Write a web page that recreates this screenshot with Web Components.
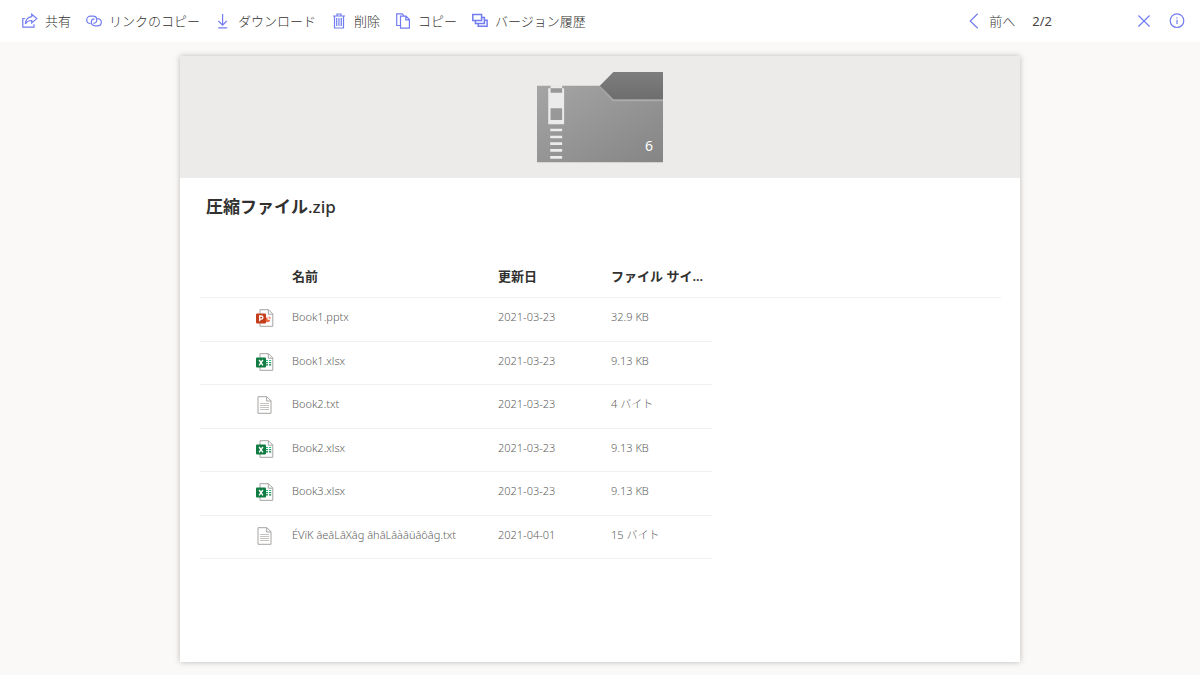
<!DOCTYPE html>
<html lang="ja">
<head>
<meta charset="utf-8">
<meta name="viewport" content="width=device-width, initial-scale=1">
<title>圧縮ファイル.zip</title>
<style>
  html { height: 100%; }
  body {
    margin: 0;
    min-height: 100%;
    display: flex;
    flex-direction: column;
    background: #faf9f8;
    color: #323130;
    font-family: "Noto Sans", "Noto Sans CJK JP", sans-serif;
    font-size: 13px;
    line-height: 20px;
  }
  file-viewer { flex: 1; }
</style>
</head>
<body>
<file-viewer></file-viewer>

<script>
const ICONS = {
  share: '<path d="M3 5.5H.8V14.2H12V11.2"/><path d="M9.7 1.2L14.8 5.6L9.7 10V7.5C6.6 7.5 4.8 8.7 3.4 11C3.6 7 5.8 4.2 9.7 3.7Z"/>',
  link: '<path d="M4.6 10.5C2.3 10.5.7 9 .7 7C.7 5 2.3 3.2 4.6 3.2H7C9.2 3.2 10.8 4.8 10.8 6.8C10.8 8.8 9.3 10.3 7.4 10.3"/><path d="M11.4 5.7C13.7 5.7 15.3 7.2 15.3 9.2C15.3 11.2 13.7 12.8 11.4 12.8H9.2C7 12.8 5.3 11.3 5.3 9.3C5.3 7.3 6.8 5.9 8.6 5.9"/>',
  download: '<path d="M7.6 1V12M3.4 8L7.6 12.2L11.8 8M3.2 14.9H12.2"/>',
  trash: '<path d="M2 3H14M6 3V1H10V3M3.5 3V15H12.5V3"/><path d="M5.5 5V13M7.2 5V13M8.9 5V13M10.5 5V13" stroke-width=".9"/>',
  copy: '<path d="M5.5 12.5H1.7V.9H7.2L9.1 2.8"/><path d="M5.5 3.2H11L14.4 6.6V15.2H5.5ZM10.8 3.4V6.8H14.2"/>',
  versions: '<g stroke-width="1.5"><path d="M.8 1.5H9.6V7.5H.8Z"/><path d="M3.4 8V10.4H12.4V4.4H10M6.2 10.8V13.3H15.1V7.3H12.8"/></g>',
  back: '<path d="M11.7 .8L4.2 8L11.7 15.2"/>',
  close: '<path d="M2.4 2.5L13.6 13.5M13.6 2.5L2.4 13.5"/>',
  info: '<circle cx="8" cy="7.7" r="6.8"/><path d="M8 6.8V11M8 4.3V5.5"/>'
};

const PAGE = '<path d="M4 .7H12.5L16.8 5V17.3H4Z" fill="#fff" stroke="#a6a4a2"/><path d="M12.3 .8V5.2H16.7" fill="none" stroke="#a6a4a2"/>';
const FILE_ICONS = {
  pptx: PAGE + '<path d="M11.5 8.2A2.5 2.5 0 1 0 14 10.7H11.5Z" fill="#ed6c47"/><path d="M12.6 7.3V9.7H15A2.5 2.5 0 0 0 12.6 7.3Z" fill="#ff8f6b"/><rect y="4.6" width="10" height="10" rx="1" fill="#c43e1c"/><path d="M3.7 12.3V7H5.3A1.5 1.5 0 0 1 5.3 10.2H3.7" fill="none" stroke="#fff" stroke-width="1.3"/>',
  xlsx: PAGE + '<path d="M10 7.5H12M13 7.5H15.2" stroke="#33c481" stroke-width="1.2"/><path d="M10 9.7H12M13 9.7H15.2" stroke="#21a366" stroke-width="1.2"/><path d="M10 11.9H12M13 11.9H15.2" stroke="#107c41" stroke-width="1.2"/><rect y="4.6" width="10" height="10" rx="1" fill="#107c41"/><path d="M3.1 7L6.9 12.3M6.9 7L3.1 12.3" stroke="#fff" stroke-width="1.4"/>',
  txt: '<path d="M2 .7H10.9L15 4.8V17.3H2Z" fill="#fff" stroke="#a6a4a2"/><path d="M10.7 .8V5H14.9" fill="none" stroke="#a6a4a2"/><path d="M4 7.5H13M4 9.5H13M4 11.5H13M4 13.5H13" stroke="#c5c3c1"/>'
};

class CommandButton extends HTMLElement {
  constructor() {
    super();
    const label = this.getAttribute('label');
    this.attachShadow({ mode: 'open' }).innerHTML = `
      <style>
        :host { display: block; }
        button {
          display: flex; align-items: center; gap: 7px;
          margin: 0; padding: 0; border: 0; background: none;
          color: inherit; font: inherit; white-space: nowrap; cursor: pointer;
        }
        svg { display: block; flex: none; fill: none; stroke: #717df0; stroke-width: 1.2; }
      </style>
      <button type="button"${label ? ` aria-label="${label}"` : ''}>
        <svg width="16" height="16" viewBox="0 0 16 16" aria-hidden="true">${ICONS[this.getAttribute('icon')]}</svg>
        ${label ? '' : '<slot></slot>'}
      </button>`;
  }
}
customElements.define('command-button', CommandButton);

class CommandBar extends HTMLElement {
  constructor() {
    super();
    this.attachShadow({ mode: 'open' }).innerHTML = `
      <style>
        :host {
          display: flex; justify-content: space-between; align-items: center;
          box-sizing: border-box; min-height: 42px; padding: 0 15px 1px 22px;
          background: #fff; color: #323130; font-weight: 300;
        }
        div { display: flex; align-items: center; gap: 15px; }
        .end { gap: 17px; }
        .pager { gap: 17px; margin-right: 67px; }
        .pager span { font-weight: 400; color: #4a4846; }
      </style>
      <div role="toolbar" aria-label="ファイル操作">
        <command-button icon="share">共有</command-button>
        <command-button icon="link">リンクのコピー</command-button>
        <command-button icon="download">ダウンロード</command-button>
        <command-button icon="trash">削除</command-button>
        <command-button icon="copy">コピー</command-button>
        <command-button icon="versions">バージョン履歴</command-button>
      </div>
      <div class="end">
        <div class="pager"><command-button icon="back">前へ</command-button><span>2/2</span></div>
        <command-button icon="close" label="閉じる"></command-button>
        <command-button icon="info" label="情報"></command-button>
      </div>`;
  }
}
customElements.define('command-bar', CommandBar);

class ZipFolder extends HTMLElement {
  constructor() {
    super();
    this.attachShadow({ mode: 'open' }).innerHTML = `
      <style>
        :host { display: block; position: relative; width: 126px; }
        svg { display: block; }
        span {
          position: absolute; right: 10px; bottom: 7px;
          color: #fff; font-size: 14px; line-height: 20px;
        }
      </style>
      <svg width="126" height="91" viewBox="0 0 381 273" preserveAspectRatio="none" aria-hidden="true">
        <defs>
          <linearGradient id="front" x1="0" y1="0" x2="1" y2="1">
            <stop offset="0" stop-color="#a5a5a5"/><stop offset="1" stop-color="#858585"/>
          </linearGradient>
          <linearGradient id="tab" x1="0" y1="0" x2="0" y2="1">
            <stop offset="0" stop-color="#7d7d7d"/><stop offset="1" stop-color="#6e6e6e"/>
          </linearGradient>
        </defs>
        <path d="M0 41H190L231 80H381V271H0Z" fill="url(#front)"/>
        <path d="M187 41H193L233 80H381V88H229Z" fill="#aaa"/>
        <path d="M190 41L231 0H381V82H231Z" fill="url(#tab)"/>
        <path d="M34 49H41V40H76V49H82V157H34Z" fill="#ebebeb"/>
        <path d="M41 49H76V62H41ZM41 109H76V144H41Z" fill="#989898"/>
        <path d="M40 174H76M40 195H76M40 215H76M40 235H76M40 256H76" stroke="#ececec" stroke-width="8"/>
      </svg>
      <span><slot></slot></span>`;
  }
}
customElements.define('zip-folder', ZipFolder);

class FileIcon extends HTMLElement {
  constructor() {
    super();
    this.attachShadow({ mode: 'open' }).innerHTML = `
      <style>:host, svg { display: block; }</style>
      <svg width="18" height="18" viewBox="0 0 18 18" aria-hidden="true">${FILE_ICONS[this.getAttribute('type')]}</svg>`;
  }
}
customElements.define('file-icon', FileIcon);

const FILES = [
  ['Book1.pptx', '2021-03-23', '32.9 KB'],
  ['Book1.xlsx', '2021-03-23', '9.13 KB'],
  ['Book2.txt', '2021-03-23', '4 バイト'],
  ['Book2.xlsx', '2021-03-23', '9.13 KB'],
  ['Book3.xlsx', '2021-03-23', '9.13 KB'],
  ['ÉVïK âeâLâXâg âhâLâàâüâôâg.txt', '2021-04-01', '15 バイト']
];

class FileTable extends HTMLElement {
  constructor() {
    super();
    const rows = FILES.map(([name, date, size]) => `
      <tr>
        <td class="type"><file-icon type="${name.split('.').pop()}"></file-icon></td>
        <td>${name}</td><td>${date}</td><td>${size}</td>
      </tr>`).join('');
    this.attachShadow({ mode: 'open' }).innerHTML = `
      <style>
        :host { display: block; }
        table { width: 100%; table-layout: fixed; border-collapse: separate; border-spacing: 0; }
        .c-type { width: 92px; } .c-name { width: 206px; }
        .c-date { width: 113px; } .c-size { width: 101px; }
        th, td {
          box-sizing: border-box; padding: 0; text-align: left; white-space: nowrap;
          border-bottom: 1px solid #f3f2f1;
        }
        th { height: 42px; padding-bottom: 1px; font-size: 13px; line-height: 20px; font-weight: 600; }
        td { height: 44px; padding-bottom: 5px; font-size: 11px; line-height: 16px; font-weight: 300; color: #605e5c; }
        tr:nth-child(even) td { height: 43px; }
        td.type { padding: 0 0 3px 56px; }
      </style>
      <table>
        <colgroup><col class="c-type"><col class="c-name"><col class="c-date"><col class="c-size"><col></colgroup>
        <thead><tr><th></th><th scope="col">名前</th><th scope="col">更新日</th><th scope="col">ファイル サイ...</th><th></th></tr></thead>
        <tbody>${rows}</tbody>
      </table>`;
  }
}
customElements.define('file-table', FileTable);

class PreviewCard extends HTMLElement {
  constructor() {
    super();
    this.attachShadow({ mode: 'open' }).innerHTML = `
      <style>
        :host { display: flex; flex-direction: column; background: #fff; box-shadow: 0 0 6px rgba(0, 0, 0, .25); }
        header { display: flex; justify-content: center; padding: 16px 0 15px; background: #ecebe9; }
        h1 { margin: 17px 26px 37px; font-size: 17px; line-height: 24px; font-weight: 600; }
        .list { padding: 0 19px 0 20px; }
      </style>
      <header><slot name="picture"></slot></header>
      <h1><slot name="title"></slot></h1>
      <div class="list"><slot></slot></div>`;
  }
}
customElements.define('preview-card', PreviewCard);

class FileViewer extends HTMLElement {
  constructor() {
    super();
    this.attachShadow({ mode: 'open' }).innerHTML = `
      <style>
        :host { display: flex; flex-direction: column; }
        main { flex: 1; display: flex; padding: 14px 15% 13px; }
        preview-card { flex: 1; min-width: 0; }
        .extension { font-weight: 500; }
      </style>
      <command-bar></command-bar>
      <main>
        <preview-card>
          <zip-folder slot="picture">6</zip-folder>
          <span slot="title">圧縮ファイル<span class="extension">.zip</span></span>
          <file-table></file-table>
        </preview-card>
      </main>`;
  }
}
customElements.define('file-viewer', FileViewer);
</script>
</body>
</html>
